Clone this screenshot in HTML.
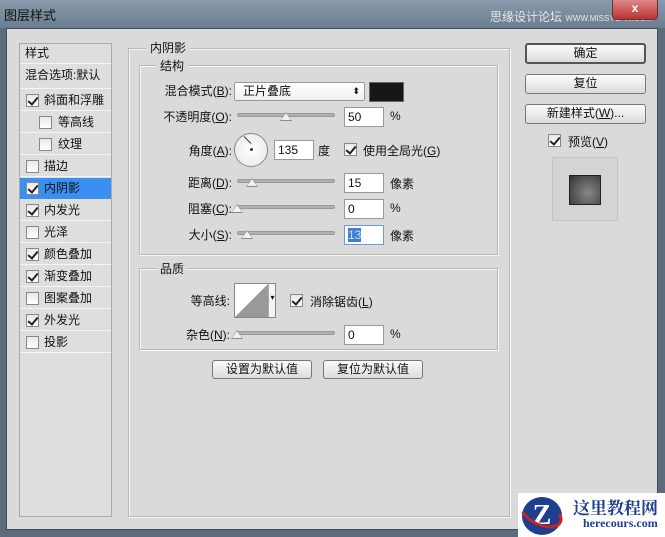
<!DOCTYPE html>
<html><head><meta charset="utf-8"><style>
*{margin:0;padding:0;box-sizing:border-box}
body{width:665px;height:537px;overflow:hidden;background:#5a6b7c;font-family:"Liberation Sans","Noto Sans CJK SC",sans-serif;font-size:12px;color:#111;position:relative}
.a{position:absolute}
.title{left:0;top:0;width:665px;height:28px;background:linear-gradient(#8a9aab,#6a7d90);}
.body{left:6px;top:28px;width:652px;height:502px;background:#dadada;border:1px solid #3d4a58}
.lst{left:19px;top:43px;width:93px;height:474px;border:1px solid #aaa;background:#dedede}
.it{position:absolute;left:20px;width:91px;height:21px;border-bottom:1px solid #f4f4f4;line-height:20px}
.cb{position:absolute;width:13px;height:13px;border:1px solid #888;background:linear-gradient(#e8e8e8,#fff);top:4px}
.cb.k::after{content:"";position:absolute;left:3px;top:0px;width:4px;height:8px;border:solid #222;border-width:0 2px 2px 0;transform:rotate(40deg)}
.grp{border:1px solid #b8b8b8;box-shadow:1px 1px 0 #f6f6f6 inset,1px 1px 0 #f6f6f6}
.lg{background:#dadada;padding:0 4px}
.sl{position:absolute;height:4px;border-radius:2px;background:#b0b0b0;border:1px solid #999}
.th{position:absolute;width:0;height:0;border-left:6px solid transparent;border-right:6px solid transparent;border-bottom:9px solid #888}
.th::after{content:"";position:absolute;left:-5px;top:1px;border-left:5px solid transparent;border-right:5px solid transparent;border-bottom:7px solid #f0f0f0}
.in{position:absolute;width:40px;height:20px;background:#fff;border:1px solid #999;padding-left:3px;line-height:18px}
.btn{position:absolute;border:1px solid #777;border-radius:3px;background:linear-gradient(#fafafa,#dcdcdc);text-align:center;line-height:17px}
.lb{position:absolute;text-align:right;line-height:20px}
</style></head><body>
<div class="a title"></div>
<div class="a" style="left:4px;top:5px;color:#111;font-size:13px">图层样式</div>
<div class="a" style="left:490px;top:8px;color:#e8e8e8;font-size:12px">思缘设计论坛 <span style="font-size:8px">WWW.MISSYUAN.COM</span></div>
<div class="a" style="left:612px;top:0;width:46px;height:20px;background:linear-gradient(#d88,#b33);border:1px solid #633;border-top:none;border-radius:0 0 4px 4px;color:#fff;text-align:center;font-weight:bold;line-height:16px">x</div>
<div class="a body"></div>
<div class="a lst"></div>
<div class="it" style="top:43px;padding-left:5px;height:21px">样式</div>
<div class="it" style="top:65px;padding-left:5px;height:24px">混合选项:默认</div>
<div class="it" style="top:90px"><span class="cb k" style="left:6px"></span><span style="margin-left:24px">斜面和浮雕</span></div>
<div class="it" style="top:112px"><span class="cb" style="left:19px"></span><span style="margin-left:38px">等高线</span></div>
<div class="it" style="top:134px"><span class="cb" style="left:19px"></span><span style="margin-left:38px">纹理</span></div>
<div class="it" style="top:156px"><span class="cb" style="left:6px"></span><span style="margin-left:24px">描边</span></div>
<div class="it" style="top:178px;background:#3b8ff0;border:none"><span class="cb k" style="left:6px"></span><span style="margin-left:24px">内阴影</span></div>
<div class="it" style="top:200px"><span class="cb k" style="left:6px"></span><span style="margin-left:24px">内发光</span></div>
<div class="it" style="top:222px"><span class="cb" style="left:6px"></span><span style="margin-left:24px">光泽</span></div>
<div class="it" style="top:244px"><span class="cb k" style="left:6px"></span><span style="margin-left:24px">颜色叠加</span></div>
<div class="it" style="top:266px"><span class="cb k" style="left:6px"></span><span style="margin-left:24px">渐变叠加</span></div>
<div class="it" style="top:288px"><span class="cb" style="left:6px"></span><span style="margin-left:24px">图案叠加</span></div>
<div class="it" style="top:310px"><span class="cb k" style="left:6px"></span><span style="margin-left:24px">外发光</span></div>
<div class="it" style="top:332px"><span class="cb" style="left:6px"></span><span style="margin-left:24px">投影</span></div>

<div class="a grp" style="left:128px;top:48px;width:382px;height:469px"></div>
<div class="a lg" style="left:146px;top:39px">内阴影</div>
<div class="a grp" style="left:139px;top:65px;width:359px;height:190px"></div>
<div class="a lg" style="left:156px;top:57px">结构</div>

<div class="lb" style="left:150px;top:81px;width:82px">混合模式(<u>B</u>):</div>
<div class="a" style="left:234px;top:82px;width:131px;height:19px;background:linear-gradient(#fff,#f0f0f0);border:1px solid #999;border-radius:2px;padding-left:8px;line-height:17px">正片叠底<span style="position:absolute;right:4px;font-size:9px">⬍</span></div>
<div class="a" style="left:369px;top:82px;width:35px;height:20px;background:#161616;border:1px solid #666"></div>

<div class="lb" style="left:150px;top:107px;width:82px">不透明度(<u>O</u>):</div>
<div class="sl" style="left:237px;top:113px;width:98px"></div><div class="th" style="left:280px;top:112px"></div>
<div class="in" style="left:344px;top:107px">50</div><div class="a" style="left:390px;top:109px">%</div>

<div class="lb" style="left:150px;top:141px;width:82px">角度(<u>A</u>):</div>
<div class="a" style="left:234px;top:133px;width:34px;height:34px;border-radius:50%;border:1px solid #888;background:radial-gradient(#fff,#e6e6e6)"></div>
<div class="a" style="left:241px;top:143px;width:10px;height:1px;background:#333;transform:rotate(45deg);transform-origin:right"></div>
<div class="a" style="left:250px;top:148px;width:3px;height:3px;border-radius:50%;background:#333"></div>
<div class="in" style="left:274px;top:140px">135</div><div class="a" style="left:318px;top:142px">度</div>
<span class="cb k" style="left:344px;top:143px"></span><div class="a" style="left:363px;top:142px">使用全局光(<u>G</u>)</div>

<div class="lb" style="left:150px;top:173px;width:82px">距离(<u>D</u>):</div>
<div class="sl" style="left:237px;top:179px;width:98px"></div><div class="th" style="left:246px;top:178px"></div>
<div class="in" style="left:344px;top:173px">15</div><div class="a" style="left:390px;top:175px">像素</div>
<div class="lb" style="left:150px;top:199px;width:82px">阻塞(<u>C</u>):</div>
<div class="sl" style="left:237px;top:205px;width:98px"></div><div class="th" style="left:231px;top:204px"></div>
<div class="in" style="left:344px;top:199px">0</div><div class="a" style="left:390px;top:201px">%</div>
<div class="lb" style="left:150px;top:225px;width:82px">大小(<u>S</u>):</div>
<div class="sl" style="left:237px;top:231px;width:98px"></div><div class="th" style="left:241px;top:230px"></div>
<div class="in" style="left:344px;top:225px;border-color:#6a9ad8"><span style="background:#3b7fd8;color:#cde">13</span></div><div class="a" style="left:390px;top:227px">像素</div>

<div class="a grp" style="left:139px;top:268px;width:359px;height:82px"></div>
<div class="a lg" style="left:156px;top:260px">品质</div>
<div class="lb" style="left:150px;top:291px;width:80px">等高线:</div>
<div class="a" style="left:234px;top:283px;width:42px;height:35px;border:1px solid #888;background:#fff;overflow:hidden">
<svg width="34" height="33" style="position:absolute;left:0;top:0"><polygon points="0,33 33,0 33,33" fill="#999"/></svg>
<div style="position:absolute;left:33px;top:0;width:8px;height:33px;border-left:1px solid #aaa;background:#f4f4f4;font-size:8px;line-height:28px;text-align:center">▾</div></div>
<span class="cb k" style="left:290px;top:294px"></span><div class="a" style="left:310px;top:293px">消除锯齿(<u>L</u>)</div>
<div class="lb" style="left:150px;top:325px;width:80px">杂色(<u>N</u>):</div>
<div class="sl" style="left:237px;top:331px;width:98px"></div><div class="th" style="left:231px;top:330px"></div>
<div class="in" style="left:344px;top:325px">0</div><div class="a" style="left:390px;top:327px">%</div>

<div class="btn" style="left:212px;top:360px;width:100px;height:19px">设置为默认值</div>
<div class="btn" style="left:323px;top:360px;width:100px;height:19px">复位为默认值</div>

<div class="btn" style="left:525px;top:43px;width:121px;height:21px;border:2px solid #555;line-height:17px">确定</div>
<div class="btn" style="left:525px;top:74px;width:121px;height:20px">复位</div>
<div class="btn" style="left:525px;top:104px;width:121px;height:20px">新建样式(<u>W</u>)...</div>
<span class="cb k" style="left:548px;top:134px"></span><div class="a" style="left:568px;top:133px">预览(<u>V</u>)</div>
<div class="a" style="left:552px;top:157px;width:66px;height:64px;border:1px solid #c4c4c4;background:#d4d4d4"></div>
<div class="a" style="left:569px;top:175px;width:32px;height:30px;background:radial-gradient(circle at 60% 60%,#888,#333);border:1px solid #222"></div>

<div class="a" style="left:518px;top:493px;width:147px;height:44px;background:#fff"></div>
<div class="a" style="left:522px;top:497px;width:40px;height:38px;border-radius:50%;background:#1e3f8f;color:#fff;font-weight:bold;font-size:28px;text-align:center;line-height:38px;font-family:'Liberation Serif',serif">Z</div>
<div class="a" style="left:518px;top:500px;width:46px;height:26px;border:3px solid #c22;border-radius:50%;transform:rotate(25deg);border-left-color:transparent;border-top-color:transparent"></div>
<div class="a" style="left:573px;top:494px;color:#1e3f8f;font-weight:bold;font-size:17px;font-family:'Liberation Serif','Noto Serif CJK SC',serif">这里教程网</div>
<div class="a" style="left:583px;top:516px;color:#1e3f8f;font-weight:bold;font-size:12px;font-family:'Liberation Serif',serif">herecours.com</div>
</body></html>
